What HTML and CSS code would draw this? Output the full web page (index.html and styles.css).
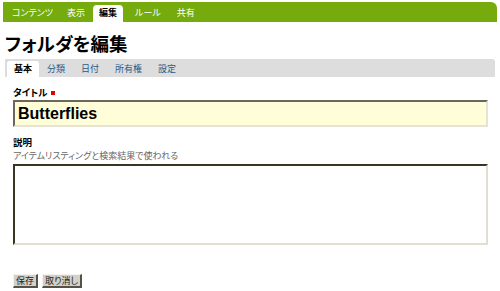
FILE: index.html
```html
<!DOCTYPE html>
<html lang="ja">
<head>
<meta charset="UTF-8">
<title>フォルダを編集</title>
<link rel="stylesheet" href="styles.css">
</head>
<body>
  <div class="top-nav">
    <span class="nav-tab">コンテンツ</span>
    <span class="nav-tab">表示</span>
    <span class="nav-tab active">編集</span>
    <span class="nav-tab">ルール</span>
    <span class="nav-tab">共有</span>
  </div>

  <h1>フォルダを編集</h1>

  <div class="sub-tabs">
    <span class="sub-tab active">基本</span>
    <span class="sub-tab">分類</span>
    <span class="sub-tab">日付</span>
    <span class="sub-tab">所有権</span>
    <span class="sub-tab">設定</span>
  </div>

  <form class="edit-form">
    <div class="field">
      <label for="title">タイトル <span class="required"></span></label>
      <input type="text" id="title" class="title-input" value="Butterflies">
    </div>

    <div class="field">
      <label for="description">説明</label>
      <div class="help">アイテムリスティングと検索結果で使われる</div>
      <textarea id="description"></textarea>
    </div>

    <div class="buttons">
      <button type="button">保存</button>
      <button type="button">取り消し</button>
    </div>
  </form>
</body>
</html>
```

FILE: styles.css
```css
body {
  margin: 0;
  padding: 0;
  background: #fff;
  font-family: "Liberation Sans", "Noto Sans CJK JP", sans-serif;
  font-size: 9px;
  font-feature-settings: "palt";
  color: #000;
}

.top-nav {
  margin: 2px 3px 0 3px;
  height: 20px;
  background-color: #76ab0d;
  border-radius: 0 6px 0 0;
  display: flex;
  align-items: flex-end;
  padding-left: 2px;
  box-sizing: border-box;
}
.nav-tab {
  padding: 0 7px;
  height: 17px;
  line-height: 17px;
  color: #fff;
  font-size: 9px;
}
.nav-tab.active {
  background: #fff;
  color: #000;
  font-weight: bold;
  border-radius: 4px 4px 0 0;
  padding: 0 6px;
  margin: 0 4px 0 1px;
}
.nav-tab.active ~ .nav-tab {
  padding: 0 8px;
}

h1 {
  margin: 12px 0 0 5px;
  font-size: 18.5px;
  line-height: 22px;
  font-weight: bold;
}

.sub-tabs {
  margin: 3px 5px 0 5px;
  height: 18px;
  background: #dddddd;
  display: flex;
  align-items: flex-end;
  padding-left: 2px;
  border-radius: 0 3px 0 0;
}
.sub-tab {
  padding: 0 8px;
  height: 16px;
  line-height: 16px;
  color: #2a5a8a;
  font-size: 9px;
}
.sub-tab.active {
  background: #fff;
  color: #000;
  font-weight: bold;
  border-radius: 3px 3px 0 0;
  padding: 0 7px;
}

.edit-form {
  margin: 10px 12px 0 13px;
}
.field label {
  display: block;
  font-weight: bold;
  font-size: 9.5px;
  line-height: 12px;
}
.required {
  display: inline-block;
  width: 4px;
  height: 4px;
  background: #e00000;
  vertical-align: 1px;
  margin-left: 1px;
}
.title-input {
  display: block;
  margin-top: 1px;
  width: 100%;
  height: 27px;
  box-sizing: border-box;
  background: #fffed9;
  border-style: solid;
  border-width: 2px;
  border-color: #6b675a #e6e2d4 #e6e2d4 #6b675a;
  padding: 0 3px;
  font-family: "Liberation Sans", sans-serif;
  font-size: 16px;
  font-weight: bold;
  color: #000;
}
.field + .field {
  margin-top: 10px;
}
.help {
  color: #666;
  font-size: 9px;
  line-height: 12px;
  margin-top: 1px;
}
textarea {
  display: block;
  margin-top: 2px;
  width: 100%;
  height: 81px;
  box-sizing: border-box;
  border-style: solid;
  border-width: 2px;
  border-color: #3a3425 #e3dfd0 #e3dfd0 #3a3425;
  background: #fff;
  resize: none;
}

.buttons {
  margin-top: 29px;
  display: flex;
  gap: 4px;
}
.buttons button {
  font-family: "Liberation Sans", "Noto Sans CJK JP", sans-serif;
  font-size: 9px;
  font-feature-settings: "palt";
  line-height: 10px;
  height: 14px;
  padding: 0 2px;
  background: #d4d0c8;
  border-style: solid;
  border-width: 1px 2px 2px 1px;
  border-color: #f4f2ee #55524a #55524a #f4f2ee;
  color: #222;
}
```
